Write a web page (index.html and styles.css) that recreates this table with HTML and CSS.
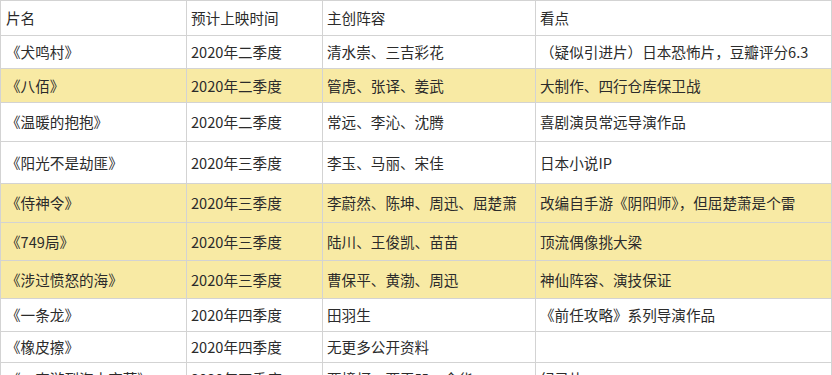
FILE: index.html
```html
<!DOCTYPE html>
<html lang="zh-CN">
<head>
<meta charset="utf-8">
<title>2020 电影片单</title>
<link rel="stylesheet" href="styles.css">
</head>
<body>
<table class="films">
  <colgroup>
    <col class="c-name"><col class="c-time"><col class="c-cast"><col class="c-note">
  </colgroup>
  <tr class="h35"><td>片名</td><td>预计上映时间</td><td>主创阵容</td><td>看点</td></tr>
  <tr class="h33"><td>《犬鸣村》</td><td>2020年二季度</td><td>清水崇、三吉彩花</td><td>（疑似引进片）日本恐怖片，豆瓣评分6.3</td></tr>
  <tr class="h34 hl"><td>《八佰》</td><td>2020年二季度</td><td>管虎、张译、姜武</td><td>大制作、四行仓库保卫战</td></tr>
  <tr class="h39"><td>《温暖的抱抱》</td><td>2020年二季度</td><td>常远、李沁、沈腾</td><td>喜剧演员常远导演作品</td></tr>
  <tr class="h42"><td>《阳光不是劫匪》</td><td>2020年三季度</td><td>李玉、马丽、宋佳</td><td>日本小说IP</td></tr>
  <tr class="h39 hl"><td>《侍神令》</td><td>2020年三季度</td><td>李蔚然、陈坤、周迅、屈楚萧</td><td>改编自手游《阴阳师》，但屈楚萧是个雷</td></tr>
  <tr class="h38 hl"><td>《749局》</td><td>2020年三季度</td><td>陆川、王俊凯、苗苗</td><td>顶流偶像挑大梁</td></tr>
  <tr class="h38 hl"><td>《涉过愤怒的海》</td><td>2020年三季度</td><td>曹保平、黄渤、周迅</td><td>神仙阵容、演技保证</td></tr>
  <tr class="h33"><td>《一条龙》</td><td>2020年四季度</td><td>田羽生</td><td>《前任攻略》系列导演作品</td></tr>
  <tr class="h31"><td>《橡皮擦》</td><td>2020年四季度</td><td>无更多公开资料</td><td></td></tr>
  <tr class="h33"><td>《一直游到海水变蓝》</td><td>2020年四季度</td><td>贾樟柯、贾平凹、余华</td><td>纪录片</td></tr>
</table>
</body>
</html>
```

FILE: styles.css
```css
html, body {
  margin: 0;
  padding: 0;
  background: #ffffff;
}

.films {
  border-collapse: collapse;
  table-layout: fixed;
  width: 831px;
  font-family: "Noto Sans CJK SC", "Microsoft YaHei", sans-serif;
  font-size: 14.6px;
  color: #2b2b2b;
}

.c-name { width: 186px; }
.c-time { width: 136px; }
.c-cast { width: 213px; }
.c-note { width: 296px; }

.films td {
  border: 1px solid #d3d3d3;
  padding: 0 0 0 4px;
  vertical-align: middle;
  white-space: nowrap;
  overflow: hidden;
  line-height: 18px;
}

.films td:first-child { padding-left: 5px; }

.films tr.hl td { background: #f8eaa4; }

.h31 { height: 31px; }
.h33 { height: 33px; }
.h34 { height: 34px; }
.h35 { height: 35px; }
.h38 { height: 38px; }
.h39 { height: 39px; }
.h42 { height: 42px; }
```
